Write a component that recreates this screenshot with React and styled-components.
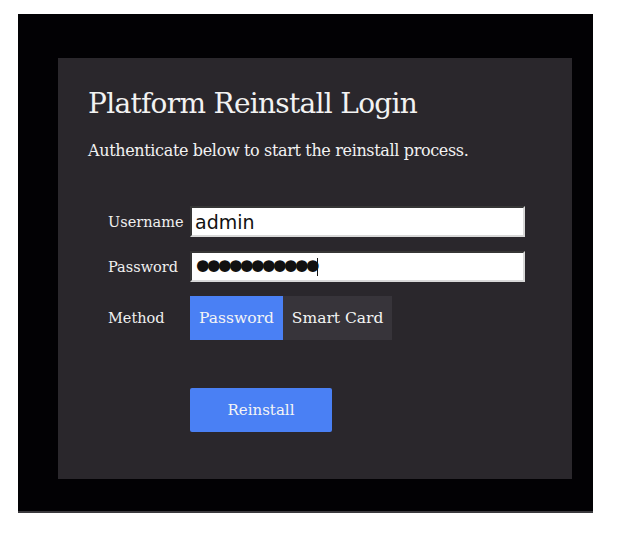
import { useState } from "react";
import styled, { createGlobalStyle } from "styled-components";

const GlobalStyle = createGlobalStyle`
  html, body {
    margin: 0;
    padding: 0;
    background: #ffffff;
  }
`;

function App() {
  const [method, setMethod] = useState("password");

  return (
    <>
      <GlobalStyle />
      <STScreen>
        <STPanel>
          <STTitle>Platform Reinstall Login</STTitle>
          <STLead>Authenticate below to start the reinstall process.</STLead>
          <STForm>
            <STLabel htmlFor="user">Username</STLabel>
            <STInput id="user" type="text" defaultValue="admin" readOnly />
            <STLabel htmlFor="pass">Password</STLabel>
            <STField>
              <STInput
                id="pass"
                type="password"
                defaultValue="12345678901"
                readOnly
                $secret
              />
              <STCaret />
            </STField>
            <STLabel as="span">Method</STLabel>
            <STSegment>
              <STOption
                $active={method === "password"}
                onClick={() => setMethod("password")}
              >
                Password
              </STOption>
              <STOption
                $active={method === "card"}
                onClick={() => setMethod("card")}
              >
                Smart Card
              </STOption>
            </STSegment>
            <span />
            <STSubmit>Reinstall</STSubmit>
          </STForm>
        </STPanel>
      </STScreen>
    </>
  );
}

const STScreen = styled.div`
  box-sizing: border-box;
  margin: 14px 0 0 18px;
  width: 575px;
  height: 499px;
  padding: 44px 21px 0 40px;
  background-color: #020104;
  border-bottom: 2px solid #3a393d;
`;

const STPanel = styled.div`
  box-sizing: border-box;
  width: 514px;
  height: 421px;
  padding: 28px 30px 0 30px;
  background-color: #2a272c;
  font-family: "DejaVu Serif", serif;
  color: #f2f2f2;
`;

const STTitle = styled.h1`
  margin: 0;
  font-size: 28px;
  font-weight: normal;
  line-height: 36px;
  letter-spacing: -0.7px;
`;

const STLead = styled.p`
  margin: 19px 0 0 0;
  font-size: 16px;
  line-height: 20px;
  letter-spacing: -0.35px;
`;

const STForm = styled.div`
  display: grid;
  grid-template-columns: 82px 335px;
  row-gap: 14px;
  align-items: center;
  margin: 45px 0 0 20px;
`;

const STLabel = styled.label`
  font-size: 14.5px;
  color: #f0f0f0;
`;

const STField = styled.div`
  position: relative;
`;

const STInput = styled.input`
  display: block;
  box-sizing: border-box;
  width: 335px;
  height: 31px;
  margin: 0;
  padding: 0 3px;
  border: 2px inset #8a8a8a;
  border-right-color: #d8d8d8;
  border-bottom-color: #d8d8d8;
  background: #ffffff;
  font-family: "DejaVu Sans", sans-serif;
  font-size: ${(p) => (p.$secret ? "40px" : "19px")};
  letter-spacing: ${(p) => (p.$secret ? "-12.6px" : "0")};
  text-indent: ${(p) => (p.$secret ? "-4px" : "0")};
  color: #111111;
  outline: none;
`;

const STCaret = styled.span`
  position: absolute;
  left: 127px;
  top: 7px;
  width: 1px;
  height: 18px;
  background-color: #111111;
`;

const STSegment = styled.div`
  display: flex;
`;

const STOption = styled.button`
  height: 44px;
  padding: 0 9px;
  border: none;
  background-color: ${(p) => (p.$active ? "#4a80f4" : "#37343a")};
  font-family: "DejaVu Serif", serif;
  font-size: 15.5px;
  color: #f4f4f4;
  cursor: pointer;
`;

const STSubmit = styled.button`
  width: 142px;
  height: 44px;
  margin-top: 34px;
  border: none;
  border-radius: 2px;
  background-color: #4a80f4;
  font-family: "DejaVu Serif", serif;
  font-size: 15px;
  color: #f4f4f4;
  cursor: pointer;
`;

export default App;
